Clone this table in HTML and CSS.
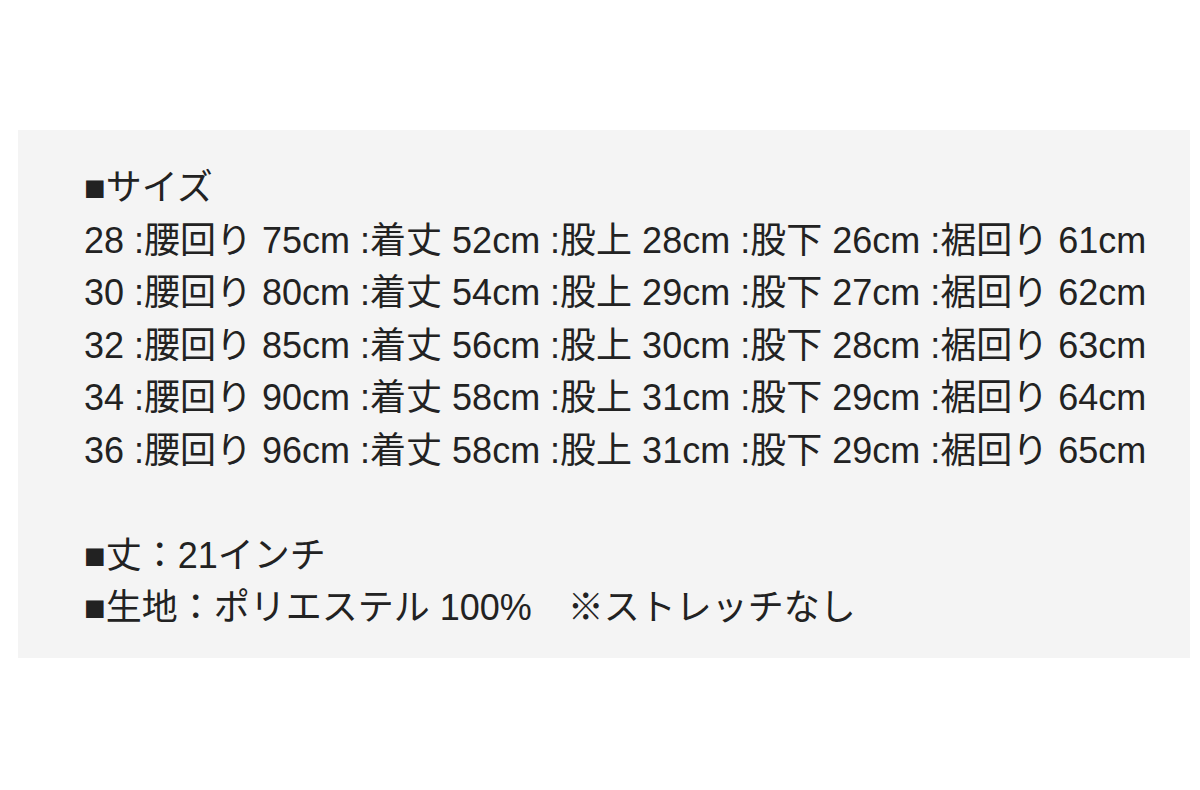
FILE: index.html
```html
<!DOCTYPE html>
<html lang="ja">
<head>
<meta charset="utf-8">
<link rel="stylesheet" href="styles.css">
</head>
<body>
<div class="box">
<p class="line">■サイズ</p>
<p class="line">28 :腰回り 75cm :着丈 52cm :股上 28cm :股下 26cm :裾回り 61cm</p>
<p class="line">30 :腰回り 80cm :着丈 54cm :股上 29cm :股下 27cm :裾回り 62cm</p>
<p class="line">32 :腰回り 85cm :着丈 56cm :股上 30cm :股下 28cm :裾回り 63cm</p>
<p class="line">34 :腰回り 90cm :着丈 58cm :股上 31cm :股下 29cm :裾回り 64cm</p>
<p class="line">36 :腰回り 96cm :着丈 58cm :股上 31cm :股下 29cm :裾回り 65cm</p>
<p class="line blank">&nbsp;</p>
<p class="line">■丈：21インチ</p>
<p class="line">■生地：ポリエステル 100%　※ストレッチなし</p>
</div>
</body>
</html>
```
FILE: styles.css
```css
html, body {
  margin: 0;
  padding: 0;
  background: #ffffff;
}
body {
  font-family: "Liberation Sans", "Noto Sans CJK JP", sans-serif;
  color: #222222;
  font-size: 36px;
  line-height: 52.5px;
}
.box {
  margin: 130px 0 0 18px;
  width: 1172px;
  height: 528px;
  box-sizing: border-box;
  padding: 32px 0 0 66px;
  background: #f4f4f4;
}
.line {
  margin: 0;
  white-space: nowrap;
}
```
